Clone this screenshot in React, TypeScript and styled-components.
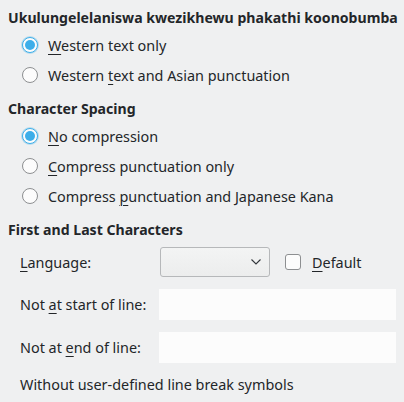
import React from 'react';
import styled, { createGlobalStyle } from 'styled-components';

const GlobalStyle = createGlobalStyle`
  html, body {
    margin: 0;
    padding: 0;
    background: #eff0f1;
  }
  body {
    font-family: 'Noto Sans', 'Open Sans', sans-serif;
    font-size: 14.4px;
    color: #232629;
  }
`;

const Page = styled.div`
  width: 404px;
  height: 402px;
  box-sizing: border-box;
  padding: 8px 0 0 8px;
  display: flex;
  flex-direction: column;
  overflow: hidden;
`;

const Heading = styled.div<{ $gap?: number }>`
  font-weight: 700;
  font-size: 14.1px;
  height: 20px;
  line-height: 20px;
  margin-top: ${(p) => p.$gap ?? 0}px;
  margin-bottom: 2px;
  white-space: nowrap;
`;

const RadioRow = styled.label`
  display: flex;
  align-items: center;
  height: 30px;
  padding-left: 14px;
  gap: 10px;
  white-space: nowrap;
`;

const RadioMark = styled.span<{ $checked?: boolean }>`
  position: relative;
  width: 16px;
  height: 16px;
  box-sizing: border-box;
  border-radius: 50%;
  border: 1px solid ${(p) => (p.$checked ? '#3daee9' : '#8d8f91')};
  background: #fcfcfc;
  box-shadow: ${(p) => (p.$checked ? '0 0 0 1px rgba(61,174,233,0.3)' : 'none')};
  &::after {
    content: '';
    display: ${(p) => (p.$checked ? 'block' : 'none')};
    position: absolute;
    left: 2px;
    top: 2px;
    width: 10px;
    height: 10px;
    border-radius: 50%;
    background: #3daee9;
  }
`;

const Mn = styled.u`
  text-decoration-thickness: 1px;
  text-underline-offset: 3px;
`;

const Form = styled.div`
  display: grid;
  grid-template-columns: 139px 237px;
  grid-template-rows: 30px 31px 31px;
  row-gap: 12px;
  padding-left: 12px;
  margin-top: 5px;
  align-items: center;
`;

const Label = styled.span`
  white-space: nowrap;
`;

const LangCell = styled.div`
  display: flex;
  align-items: center;
`;

const Combo = styled.div`
  width: 110px;
  height: 30px;
  box-sizing: border-box;
  margin-left: 1px;
  border: 1px solid #b6b8ba;
  border-radius: 3px;
  background: linear-gradient(#f3f4f4, #eceded);
  display: flex;
  align-items: center;
  justify-content: flex-end;
  padding-right: 8px;
`;

const CheckBox = styled.span`
  width: 16px;
  height: 16px;
  box-sizing: border-box;
  margin-left: 15px;
  margin-right: 11px;
  border: 1px solid #8d8f91;
  border-radius: 3px;
  background: #fcfcfc;
`;

const TextField = styled.div`
  height: 31px;
  background: #fcfcfc;
`;

const Note = styled.div`
  height: 20px;
  line-height: 20px;
  padding-left: 12px;
  margin-top: 12px;
  white-space: nowrap;
`;

const Radio: React.FC<{ checked?: boolean; children: React.ReactNode }> = ({ checked, children }) => (
  <RadioRow>
    <RadioMark $checked={checked} />
    <span>{children}</span>
  </RadioRow>
);

const App: React.FC = () => (
  <>
    <GlobalStyle />
    <Page>
      <Heading>Ukulungelelaniswa kwezikhewu phakathi koonobumba</Heading>
      <Radio checked>
        <Mn>W</Mn>estern text only
      </Radio>
      <Radio>
        Western <Mn>t</Mn>ext and Asian punctuation
      </Radio>

      <Heading $gap={9}>Character Spacing</Heading>
      <Radio checked>
        <Mn>N</Mn>o compression
      </Radio>
      <Radio>
        <Mn>C</Mn>ompress punctuation only
      </Radio>
      <Radio>
        Compress <Mn>p</Mn>unctuation and Japanese Kana
      </Radio>

      <Heading $gap={9}>First and Last Characters</Heading>
      <Form>
        <Label>
          <Mn>L</Mn>anguage:
        </Label>
        <LangCell>
          <Combo>
            <svg width="10" height="6" viewBox="0 0 10 6">
              <path d="M0.5 0.5 L5 5 L9.5 0.5" fill="none" stroke="#31363b" strokeWidth="1.1" />
            </svg>
          </Combo>
          <CheckBox />
          <Label>
            <Mn>D</Mn>efault
          </Label>
        </LangCell>
        <Label>
          Not <Mn>a</Mn>t start of line:
        </Label>
        <TextField />
        <Label>
          Not at <Mn>e</Mn>nd of line:
        </Label>
        <TextField />
      </Form>
      <Note>Without user-defined line break symbols</Note>
    </Page>
  </>
);

export default App;
